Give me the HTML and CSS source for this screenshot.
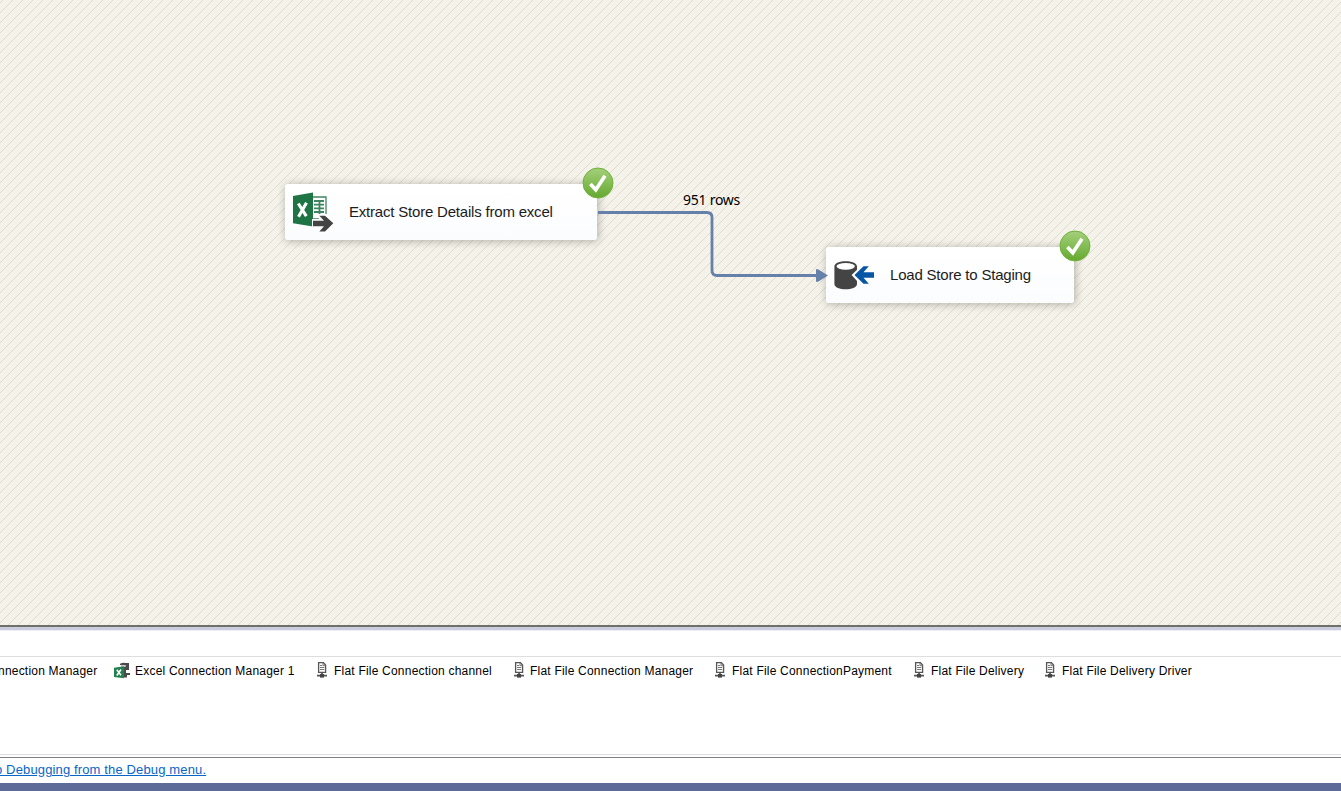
FILE: index.html
```
<!DOCTYPE html>
<html lang="en">
<head>
<meta charset="utf-8">
<title>Data Flow</title>
<link rel="stylesheet" href="styles.css">
</head>
<body>
<svg class="defs" width="0" height="0" aria-hidden="true">
  <defs>
    <linearGradient id="green" x1="0" y1="0" x2="0" y2="1"><stop offset="0" stop-color="#a5cf7c"/><stop offset=".5" stop-color="#84bd55"/><stop offset="1" stop-color="#65a82e"/></linearGradient>
    <symbol id="check" viewBox="0 0 32 32"><circle cx="16" cy="16" r="15" fill="url(#green)" stroke="#70b13b" stroke-width="1"/><path d="M8.4 17l5.4 5.8L23 8.8" fill="none" stroke="#fff" stroke-width="3.6"/></symbol>
    <symbol id="flat" viewBox="0 0 12 17"><path d="M2.6.7h4.8l2.2 2.4v7.3h-7z" fill="#fff" stroke="#555" stroke-width="1.3"/><path d="M4 3.5h2.2M4 5.5h4.3M4 7.5h4.3M7 1v2.7h2.5" fill="none" stroke="#777"/><path d="M6 10.5v3M1 13.6h10" stroke="#555" stroke-width="1.8"/><path d="M4 12h4v3.6H4z" fill="#444"/></symbol>
    <pattern id="hatch" width="10" height="10" patternUnits="userSpaceOnUse"><path d="M-2 5L5-2M1 12L12 1" stroke="#d9d8d1" stroke-width=".9"/></pattern>
  </defs>
</svg>
<main class="canvas">
  <svg class="hatching" width="1341" height="625" aria-hidden="true"><rect width="1341" height="625" fill="url(#hatch)"/></svg>
  <section class="task extract">
    <svg class="icon" width="42" height="42" viewBox="0 0 42 42"><path d="M20 6h14v22H20z" fill="#fff" stroke="#3f8560" stroke-width="1.3"/><path d="M22 10h10M22 13.7h10M22 17.4h10M22 21h10M27.5 9v14" stroke="#3c8560" stroke-width="1.8"/><path d="M1 5L21 1.6v34L1 32.3z" fill="#1f7446"/><path d="M6.3 12.5l8 12.6M14.5 11.8l-8 14" stroke="#fff" stroke-width="3.1"/><path d="M20 28h7l-1-5h9l8 9-8 10h-9l2-6h-8z" fill="#fff"/><path d="M21 29.7h11l-4.7-5H33l8.3 7.6L33 40.5h-5.7l4.7-5.3H21z" fill="#444"/></svg>
    <span class="label">Extract Store Details from excel</span>
    <svg class="badge" width="32" height="32"><use href="#check"/></svg>
  </section>
  <section class="task load">
    <svg class="icon" width="42" height="42" viewBox="0 0 42 42"><path d="M1.4 12.5C1.4 5.5 24 5.5 24 12.5v3.3L18.6 21l5.4 6v3c0 7-22.6 7-22.6 0z" fill="#444"/><ellipse cx="12.7" cy="12.3" rx="9.2" ry="3.4" fill="#fff"/><path d="M21.5 21l9-8.8h5.3l-5.3 6H41v5.5H30.5l5.3 6h-5.3z" fill="#0656a5"/></svg>
    <span class="label">Load Store to Staging</span>
    <svg class="badge" width="32" height="32"><use href="#check"/></svg>
  </section>
  <svg class="path" width="232" height="78" viewBox="0 0 232 78"><path d="M0 7.5h109q5 0 5 5v53q0 5 5 5h100" fill="none" stroke="#6581aa" stroke-width="2.8"/><path d="M218 64.2h2l10 6.3-10 6.3h-2z" fill="#6581aa"/></svg>
  <span class="rows">951 rows</span>
</main>
<div class="splitter"></div>
<section class="managers">
  <ul class="connections">
    <li class="clipped"><span>nnection Manager</span></li>
    <li class="excel"><svg width="16" height="17" viewBox="0 0 16 17"><path d="M6 3V1.8Q9 0 12 1h3v7h-3v3h4v2h-3v2.5H9V5h2.5V3H8z" fill="#4b4b4b"/><path d="M7 3h4v2H7z" fill="#ccc"/><path d="M0 5.7L10 4.3v12L0 15z" fill="#23804f"/><path d="M2.8 7.8l4.2 5.5M7 7.5l-4.2 6" stroke="#fff" stroke-width="1.6"/></svg><span>Excel Connection Manager 1</span></li>
    <li class="channel"><svg width="12" height="17"><use href="#flat"/></svg><span>Flat File Connection channel</span></li>
    <li class="manager"><svg width="12" height="17"><use href="#flat"/></svg><span>Flat File Connection Manager</span></li>
    <li class="payment"><svg width="12" height="17"><use href="#flat"/></svg><span>Flat File ConnectionPayment</span></li>
    <li class="delivery"><svg width="12" height="17"><use href="#flat"/></svg><span>Flat File Delivery</span></li>
    <li class="driver"><svg width="12" height="17"><use href="#flat"/></svg><span>Flat File Delivery Driver</span></li>
  </ul>
</section>
<div class="message"><a href="#">o Debugging from the Debug menu.</a></div>
<footer class="status"></footer>
</body>
</html>
```
FILE: styles.css
```
* { box-sizing: border-box; }
body { margin: 0; width: 1341px; height: 791px; overflow: hidden; display: flex; flex-direction: column; background: #fff; font-family: "Liberation Sans", Arial, sans-serif; color: #000; }
.defs { position: absolute; }
.canvas { position: relative; height: 625px; flex: none; background: #f5f2ea; }
.hatching { display: block; }
.path { position: absolute; left: 598px; top: 205px; }
.rows { position: absolute; left: 683px; top: 191px; font: 14px/18px "Noto Sans", sans-serif; letter-spacing: -.25px; white-space: nowrap; }
.task { position: absolute; height: 56px; display: flex; align-items: center; padding-left: 7px; gap: 15px; background: linear-gradient(#fff, #fbfcfe); border-radius: 3px; box-shadow: 1px 1px 8px rgba(70, 65, 50, .4); font-size: 15px; letter-spacing: -.2px; color: #1c1c1c; white-space: nowrap; }
.label { padding-bottom: 2px; }
.extract { left: 285px; top: 184px; width: 312px; }
.load { left: 826px; top: 247px; width: 248px; }
.badge { position: absolute; right: -17px; top: -17px; }
.splitter { flex: none; height: 6px; background: linear-gradient(#706f6b 0 2px, #c9cddd 2px 5px, #eef0f5 5px); }
.managers { flex: none; height: 124px; padding-top: 25px; border-bottom: 1px solid #dedfe3; }
.connections { display: flex; align-items: center; list-style: none; margin: 0; padding: 0; border-top: 1px solid #dedede; height: 28px; font-size: 12px; letter-spacing: .21px; white-space: nowrap; }
.connections li { display: flex; align-items: center; flex: none; }
.connections li svg { flex: none; }
.clipped { width: 114px; }
.clipped span { margin-left: -2px; }
.excel { width: 202px; gap: 5px; }
.channel { width: 197px; gap: 6px; }
.manager { width: 201px; gap: 5px; }
.payment { width: 199px; gap: 6px; }
.delivery { width: 131px; gap: 6px; }
.driver { gap: 6px; }
.message { flex: none; height: 26px; margin-top: 2px; border-top: 1px solid #818287; font-size: 13px; line-height: 24px; letter-spacing: .14px; text-indent: -5px; white-space: nowrap; }
.message a { color: #0866c6; }
.status { flex: 1; background: #5d6b99; }
```
